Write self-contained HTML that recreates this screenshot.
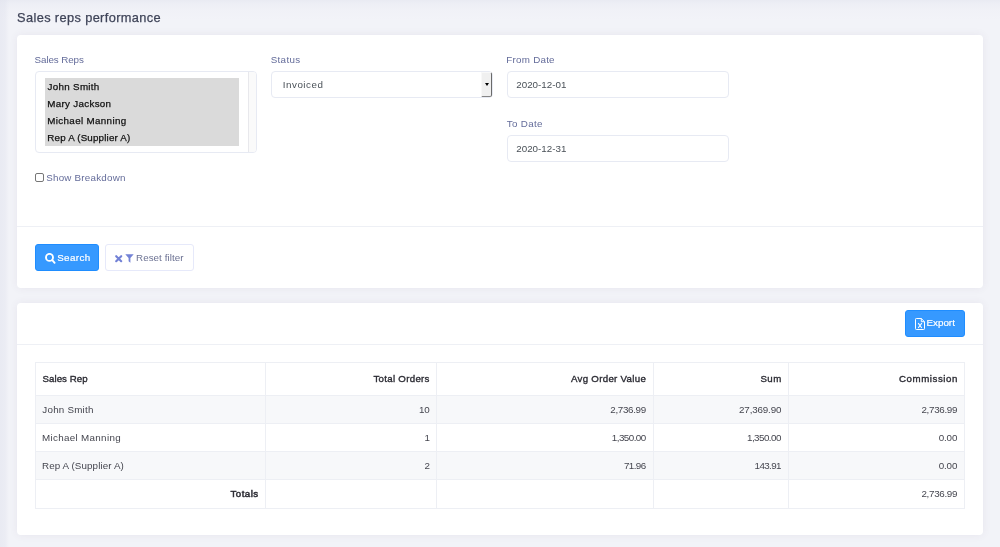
<!DOCTYPE html>
<html lang="en">
<head>
<meta charset="utf-8">
<title>Sales reps performance</title>
<style>
*{box-sizing:border-box;margin:0;padding:0}
html,body{width:1000px;height:547px;overflow:hidden}
body{position:relative;background:#f2f3f8;font-family:"Liberation Sans",sans-serif;font-size:10px;color:#495057;
  background-image:linear-gradient(to right,rgba(224,226,237,.5) 0,rgba(224,226,237,.4) 5px,rgba(224,226,237,0) 9px),
                   linear-gradient(to bottom,rgba(224,226,237,.5) 0,rgba(224,226,237,.25) 4px,rgba(224,226,237,.1) 10px,rgba(224,226,237,0) 20px)}
.t{position:absolute;white-space:pre;line-height:20px;font-weight:400}
h1{font-weight:400;font-size:inherit;position:absolute;left:0;top:0;width:400px;height:34px}
h1,section{will-change:transform}
.card{position:absolute;left:17px;width:966px;background:#fff;border-radius:4px;box-shadow:0 0 9px rgba(82,63,105,.07)}
#filter{top:35px;height:253px}
#results{top:303px;height:232px}
.sep{position:absolute;left:0;width:966px;height:1px;background:#eef0f5}
label{display:block}
.ctl{position:absolute;background:#fff;border:1px solid #e7eaf3;border-radius:4px}
.multi{left:18px;top:36px;width:222px;height:82px}
.multi ul{position:absolute;left:9px;top:6px;width:194px;list-style:none}
.multi li{position:relative;height:17px;background:#dadada}
.multi .track{position:absolute;right:0;top:0;bottom:0;width:8px;background:#fafafa;border-left:1px solid #e8e8ec;border-radius:0 3px 3px 0}
.sel{left:254px;top:36px;width:222px;height:27px}
.sel .dd{position:absolute;right:0px;top:0px;width:11px;height:25px;background:#f0f0f0;border:1px solid #f8f8f8;border-right-color:#6a6a6a;border-bottom-color:#858585;border-radius:0 2px 2px 0}
.sel .dd:after{content:"";position:absolute;left:2.5px;top:10px;border:2.5px solid transparent;border-top:3px solid #000;border-bottom:0}
.inp{left:490px;width:222px;height:27px}
#from{top:36px}
#to{top:100px}
.chk{position:absolute;left:18px;top:138px;width:9px;height:9px;border:1px solid #767676;border-radius:2px;background:#fff}
.btn{position:absolute;height:27px;border-radius:3px;border:1px solid transparent;font:inherit;display:block}
.btn.primary{background:#3699ff;border-color:#1f8dff;color:#fff}
.btn.ghost{background:#fff;border-color:#e6e9fa;color:#6c7293}
#bsearch{left:18px;top:209px;width:64px}
#breset{left:87.5px;top:209px;width:89px}
#bexport{left:888px;top:7px;width:60px}
.btn svg{position:absolute;display:block}
table{position:absolute;left:18px;top:59px;border-collapse:separate;border-spacing:0;table-layout:fixed;width:930px;border-left:1px solid #edeff4;border-top:1px solid #edeff4}
th,td{position:relative;border-right:1px solid #edeff4;border-bottom:1px solid #edeff4;padding:0;font-weight:400}
tr.s td{background:#f7f8fa}
</style>
<style>
#t_title{left:17.07px;top:8px;font-size:12.8px;font-weight:400;color:#3f4458;letter-spacing:0.37px;-webkit-text-stroke:0.25px #3f4458}
#t_l_reps{left:17.59px;top:15px;font-size:9.8px;font-weight:400;color:#646c9a;letter-spacing:-0.09px}
#t_o1{left:2.61px;top:-1px;font-size:9.8px;font-weight:400;color:#111;letter-spacing:0.3px;-webkit-text-stroke:0.25px #111}
#t_o2{left:2.33px;top:-1px;font-size:9.8px;font-weight:400;color:#111;letter-spacing:0.3px;-webkit-text-stroke:0.25px #111}
#t_o3{left:2.33px;top:-1px;font-size:9.8px;font-weight:400;color:#111;letter-spacing:0.34px;-webkit-text-stroke:0.25px #111}
#t_o4{left:2.33px;top:-1px;font-size:9.8px;font-weight:400;color:#111;letter-spacing:0.17px;-webkit-text-stroke:0.25px #111}
#t_l_status{left:253.69px;top:15px;font-size:9.8px;font-weight:400;color:#646c9a;letter-spacing:0.33px}
#t_v_status{left:10.80px;top:3px;font-size:9.8px;font-weight:400;color:#495057;letter-spacing:0.51px}
#t_l_from{left:489.36px;top:15px;font-size:9.8px;font-weight:400;color:#646c9a;letter-spacing:0.24px}
#t_v_from{left:8.25px;top:3px;font-size:9.8px;font-weight:400;color:#495057;letter-spacing:-0.0px}
#t_l_to{left:489.83px;top:79px;font-size:9.8px;font-weight:400;color:#646c9a;letter-spacing:0.31px}
#t_v_to{left:8.25px;top:3px;font-size:9.8px;font-weight:400;color:#495057;letter-spacing:-0.0px}
#t_l_chk{left:29.19px;top:133px;font-size:9.8px;font-weight:400;color:#646c9a;letter-spacing:0.23px}
#t_b_search{left:21.15px;top:3px;font-size:9.8px;font-weight:400;color:#fff;letter-spacing:0.39px;-webkit-text-stroke:0.2px #fff}
#t_b_reset{left:30.56px;top:3px;font-size:9.8px;font-weight:400;color:#6c7293;letter-spacing:0.05px}
#t_b_export{left:20.46px;top:2px;font-size:9.8px;font-weight:400;color:#fff;letter-spacing:0.02px;-webkit-text-stroke:0.2px #fff}
#t_h1{left:6.52px;top:6px;font-size:9.7px;font-weight:400;color:#2b2b33;letter-spacing:0.04px;-webkit-text-stroke:0.35px #2b2b33}
#t_h2{left:107.40px;top:6px;font-size:9.7px;font-weight:400;color:#2b2b33;letter-spacing:0.3px;-webkit-text-stroke:0.35px #2b2b33}
#t_h3{left:134.00px;top:6px;font-size:9.7px;font-weight:400;color:#2b2b33;letter-spacing:0.29px;-webkit-text-stroke:0.35px #2b2b33}
#t_h4{left:106.40px;top:6px;font-size:9.7px;font-weight:400;color:#2b2b33;letter-spacing:0.45px;-webkit-text-stroke:0.35px #2b2b33}
#t_h5{left:110.00px;top:6px;font-size:9.7px;font-weight:400;color:#2b2b33;letter-spacing:0.56px;-webkit-text-stroke:0.35px #2b2b33}
#t_r1c1{left:6.35px;top:4px;font-size:9.8px;font-weight:400;color:#45464f;letter-spacing:0.23px}
#t_r1c2{left:153.07px;top:4px;font-size:9.8px;font-weight:400;color:#45464f;letter-spacing:-0.25px}
#t_r1c3{left:173.29px;top:4px;font-size:9.8px;font-weight:400;color:#45464f;letter-spacing:-0.32px}
#t_r1c4{left:85.07px;top:4px;font-size:9.8px;font-weight:400;color:#45464f;letter-spacing:-0.16px}
#t_r1c5{left:132.49px;top:4px;font-size:9.8px;font-weight:400;color:#45464f;letter-spacing:-0.32px}
#t_r2c1{left:5.96px;top:4px;font-size:9.8px;font-weight:400;color:#45464f;letter-spacing:0.33px}
#t_r2c2{left:158.50px;top:4px;font-size:9.8px;font-weight:400;color:#45464f;letter-spacing:0px}
#t_r2c3{left:174.80px;top:4px;font-size:9.8px;font-weight:400;color:#45464f;letter-spacing:-0.53px}
#t_r2c4{left:93.00px;top:4px;font-size:9.8px;font-weight:400;color:#45464f;letter-spacing:-0.53px}
#t_r2c5{left:149.67px;top:4px;font-size:9.8px;font-weight:400;color:#45464f;letter-spacing:-0.12px}
#t_r3c1{left:5.96px;top:4px;font-size:9.8px;font-weight:400;color:#45464f;letter-spacing:0.11px}
#t_r3c2{left:158.44px;top:4px;font-size:9.8px;font-weight:400;color:#45464f;letter-spacing:0px}
#t_r3c3{left:187.00px;top:4px;font-size:9.8px;font-weight:400;color:#45464f;letter-spacing:-0.6px}
#t_r3c4{left:100.55px;top:4px;font-size:9.8px;font-weight:400;color:#45464f;letter-spacing:-0.6px}
#t_r3c5{left:149.67px;top:4px;font-size:9.8px;font-weight:400;color:#45464f;letter-spacing:-0.12px}
#t_f1{left:194.51px;top:4px;font-size:9.7px;font-weight:400;color:#2b2b33;letter-spacing:0.47px;-webkit-text-stroke:0.5px #2b2b33}
#t_f5{left:132.49px;top:4px;font-size:9.8px;font-weight:400;color:#45464f;letter-spacing:-0.32px}
</style>
</head>
<body>
<h1><span class="t" id="t_title">Sales reps performance</span></h1>

<section class="card" id="filter">
  <label for="reps"><span class="t" id="t_l_reps">Sales Reps</span></label>
  <div class="ctl multi" id="reps">
    <ul>
      <li><span class="t" id="t_o1">John Smith</span></li>
      <li><span class="t" id="t_o2">Mary Jackson</span></li>
      <li><span class="t" id="t_o3">Michael Manning</span></li>
      <li><span class="t" id="t_o4">Rep A (Supplier A)</span></li>
    </ul>
    <div class="track"></div>
  </div>

  <label><span class="t" id="t_l_status">Status</span></label>
  <div class="ctl sel"><span class="t" id="t_v_status">Invoiced</span><div class="dd"></div></div>

  <label><span class="t" id="t_l_from">From Date</span></label>
  <div class="ctl inp" id="from"><span class="t" id="t_v_from">2020-12-01</span></div>
  <label><span class="t" id="t_l_to">To Date</span></label>
  <div class="ctl inp" id="to"><span class="t" id="t_v_to">2020-12-31</span></div>

  <div class="chk"></div>
  <label><span class="t" id="t_l_chk">Show Breakdown</span></label>

  <div class="sep" style="top:190.5px"></div>

  <button class="btn primary" id="bsearch">
    <svg style="left:9px;top:8px" width="11" height="11" viewBox="0 0 11 11"><circle cx="4.5" cy="4.4" r="3.5" fill="none" stroke="#fff" stroke-width="1.9"/><path d="M7.3 7.2 L9.6 9.8" stroke="#fff" stroke-width="1.9" stroke-linecap="round"/></svg>
    <span class="t" id="t_b_search">Search</span>
  </button>
  <button class="btn ghost" id="breset">
    <svg style="left:9.5px;top:9.5px" width="8" height="8" viewBox="0 0 8 8"><path d="M1.2 1.2 L6.2 6.2 M6.2 1.2 L1.2 6.2" stroke="#7382d6" stroke-width="2.1" stroke-linecap="round"/></svg>
    <svg style="left:19.5px;top:9px" width="9" height="9" viewBox="0 0 9 9"><path d="M0.3 0.2 H8.7 L5.4 4 V8.8 L3.6 7.2 V4 Z" fill="#7382d6"/></svg>
    <span class="t" id="t_b_reset">Reset filter</span>
  </button>
</section>

<section class="card" id="results">
  <button class="btn primary" id="bexport">
    <svg style="left:9px;top:6.8px" width="10" height="12" viewBox="0 0 10 12"><path d="M1.3 .5 H6.3 L9.5 3.7 V10.7 Q9.5 11.5 8.7 11.5 H1.3 Q.5 11.5 .5 10.7 V1.3 Q.5 .5 1.3 .5 Z M6.3 .5 V3.7 H9.5" fill="none" stroke="#fff" stroke-width="1"/><path d="M3.2 5.2 L6.8 10 M6.8 5.2 L3.2 10" stroke="#fff" stroke-width="1.1"/></svg>
    <span class="t" id="t_b_export">Export</span>
  </button>
  <div class="sep" style="top:41px"></div>
  <table>
    <colgroup><col style="width:230px"><col style="width:171px"><col style="width:217px"><col style="width:135px"><col style="width:176px"></colgroup>
    <thead>
      <tr style="height:33px"><th><span class="t" id="t_h1">Sales Rep</span></th><th><span class="t" id="t_h2">Total Orders</span></th><th><span class="t" id="t_h3">Avg Order Value</span></th><th><span class="t" id="t_h4">Sum</span></th><th><span class="t" id="t_h5">Commission</span></th></tr>
    </thead>
    <tbody>
      <tr class="s" style="height:28px"><td><span class="t" id="t_r1c1">John Smith</span></td><td><span class="t" id="t_r1c2">10</span></td><td><span class="t" id="t_r1c3">2,736.99</span></td><td><span class="t" id="t_r1c4">27,369.90</span></td><td><span class="t" id="t_r1c5">2,736.99</span></td></tr>
      <tr style="height:28px"><td><span class="t" id="t_r2c1">Michael Manning</span></td><td><span class="t" id="t_r2c2">1</span></td><td><span class="t" id="t_r2c3">1,350.00</span></td><td><span class="t" id="t_r2c4">1,350.00</span></td><td><span class="t" id="t_r2c5">0.00</span></td></tr>
      <tr class="s" style="height:28px"><td><span class="t" id="t_r3c1">Rep A (Supplier A)</span></td><td><span class="t" id="t_r3c2">2</span></td><td><span class="t" id="t_r3c3">71.96</span></td><td><span class="t" id="t_r3c4">143.91</span></td><td><span class="t" id="t_r3c5">0.00</span></td></tr>
    </tbody>
    <tfoot>
      <tr style="height:29px"><td><span class="t" id="t_f1">Totals</span></td><td></td><td></td><td></td><td><span class="t" id="t_f5">2,736.99</span></td></tr>
    </tfoot>
  </table>
</section>
</body>
</html>
